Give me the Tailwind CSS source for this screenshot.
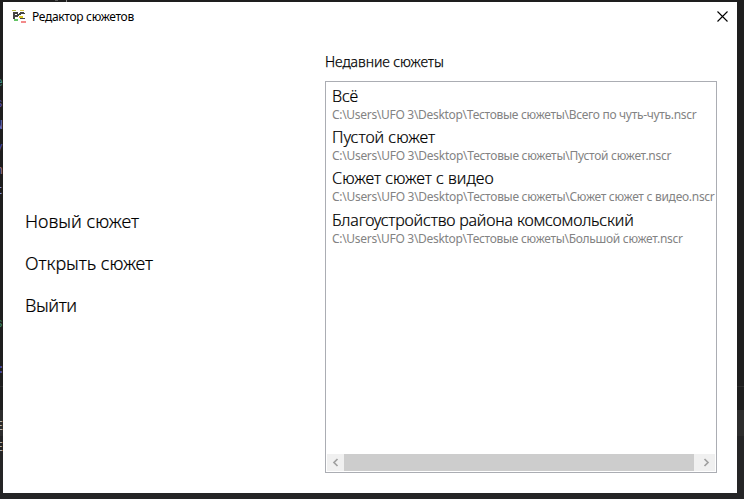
<!DOCTYPE html>
<html lang="ru"><head><meta charset="utf-8"><title>Редактор сюжетов</title>
<script src="https://cdn.jsdelivr.net/npm/@tailwindcss/browser@4"></script></head>
<body class="w-[744px] h-[499px] overflow-hidden bg-[#1e1e1e] font-['Noto_Sans','Open_Sans',sans-serif] text-black">
<div class="relative w-[744px] h-[499px] overflow-hidden pt-[2px] pl-[3px]">
  <div class="absolute left-0 top-[410px] w-full h-[26px] bg-[#2d2d2d]"></div>
  <div class="absolute left-0 top-[436px] w-full h-[63px] bg-[#252526]"></div>
  <div class="absolute left-0 top-[386px] w-full h-px bg-[#2d2d2d]"></div>
  <div class="absolute left-[55px] top-0 w-[3px] h-px bg-[#555]"></div>
  <div class="absolute left-[66px] top-0 w-px h-[2px] bg-[#888]"></div>
  <div class="absolute left-0 top-0 w-[3px] h-full overflow-hidden text-[13px] leading-[21px] font-['Liberation_Mono',monospace]">
    <span class="absolute right-0 top-[72px] text-[#3b8a83]">e</span>
    <span class="absolute right-0 top-[93px] text-[#5a4fa8]">s</span>
    <span class="absolute right-0 top-[115px] text-[#6c6bc4]">N</span>
    <span class="absolute right-0 top-[137px] text-[#4b47a0]">v</span>
    <span class="absolute right-0 top-[160px] text-[#94708a]">n</span>
    <span class="absolute right-0 top-[180px] text-[#7d8fe0]">t</span>
    <span class="absolute right-0 top-[313px] text-[#3a8560]">s</span>
    <span class="absolute -right-[2px] top-[359px] text-[#5a50b0]">:</span>
    <span class="absolute right-0 top-[416px] text-[#b0b0b0]">E</span>
    <span class="absolute right-0 top-[437px] text-[#b0b0b0]">E</span>
  </div>
  <main class="relative flex flex-col w-[734px] h-[491px] bg-white">
    <header class="flex h-[29px] items-center pl-[9px] pr-[9px]">
      <svg class="w-4 h-4" viewBox="0 0 16 16" shape-rendering="crispEdges"><path fill="#b7bd45" d="M0 1h4v1H0z"/><path fill="#d9c94a" d="M8 1h4v1H8z"/><path fill="#444" d="M1 3h5v2h1v2H6v1H3v2H1zM8 3h4v2H9v1H7V4h1zM12 4h1v1h-1zM7 8h1v1h5v1H8V9H7z"/><path fill="#fff" d="M3 5h2v1H3z"/><path fill="#65c466" d="M2 10h4v2H2z"/><path fill="#d9c520" d="M7 7h4v2H7z"/><path fill="#f38a8a" d="M9 12h5v2H9z"/></svg>
      <h1 class="ml-1 text-[12px] leading-4 tracking-[-0.32px] whitespace-nowrap">Редактор сюжетов</h1>
      <svg class="ml-auto mb-px w-[11px] h-[11px]" viewBox="0 0 11 11"><path d="M.5.5l10 10M10.5.5l-10 10" stroke="#000" stroke-width="1.1" fill="none"/></svg>
    </header>
    <div class="flex flex-1">
      <nav class="w-[322px] pl-[22px] pt-[178px] text-[18px] font-light [-webkit-text-stroke:0.2px_black] leading-[24px] flex flex-col gap-[18px] whitespace-nowrap">
        <a>Новый сюжет</a><a class="tracking-[-0.05px]">Открыть сюжет</a><a class="tracking-[-0.4px]">Выйти</a>
      </nav>
      <section class="w-[392px] pt-[21px]">
        <h2 class="text-[14px] font-light [-webkit-text-stroke:0.25px_black] leading-[20px] h-[29px] tracking-[-0.05px]">Недавние сюжеты</h2>
        <div class="w-[392px] h-[392px] border border-[#abadb3] flex flex-col p-px">
          <ul class="flex-1 pl-[5px] pt-[2px] whitespace-nowrap text-[16px] font-light leading-[22px]">
            <li class="h-[41px]"><p class="[-webkit-text-stroke:0.2px_black] tracking-[-0.2px]">Всё</p><p class="text-[12px] font-normal leading-[15px] text-[#838383] tracking-[-0.3px]">C:\Users\UFO 3\Desktop\Тестовые сюжеты\Всего по чуть-чуть.nscr</p></li>
            <li class="h-[41px]"><p class="[-webkit-text-stroke:0.2px_black]">Пустой сюжет</p><p class="text-[12px] font-normal leading-[15px] text-[#838383] tracking-[-0.28px]">C:\Users\UFO 3\Desktop\Тестовые сюжеты\Пустой сюжет.nscr</p></li>
            <li class="h-[42px]"><p class="[-webkit-text-stroke:0.2px_black]">Сюжет сюжет с видео</p><p class="text-[12px] font-normal leading-[15px] text-[#838383] tracking-[-0.28px]">C:\Users\UFO 3\Desktop\Тестовые сюжеты\Сюжет сюжет с видео.nscr</p></li>
            <li class="h-[41px]"><p class="[-webkit-text-stroke:0.2px_black] tracking-[-0.18px]">Благоустройство района комсомольский</p><p class="text-[12px] font-normal leading-[15px] text-[#838383] tracking-[-0.3px]">C:\Users\UFO 3\Desktop\Тестовые сюжеты\Большой сюжет.nscr</p></li>
          </ul>
          <div class="flex h-[17px] w-[388px] bg-[#f0f0f0]">
            <svg class="w-[17px] h-[17px]" viewBox="0 0 17 17"><path d="M10.5 5l-3.5 3.5 3.5 3.5" fill="none" stroke="#a0a0a0" stroke-width="1.7"/></svg>
            <div class="w-[350px] bg-[#cdcdcd]"></div>
            <svg class="w-[21px] h-[17px]" viewBox="0 0 21 17"><path d="M10.5 5l3.5 3.5-3.5 3.5" fill="none" stroke="#a0a0a0" stroke-width="1.7"/></svg>
          </div>
        </div>
      </section>
    </div>
  </main>
</div></body></html>
